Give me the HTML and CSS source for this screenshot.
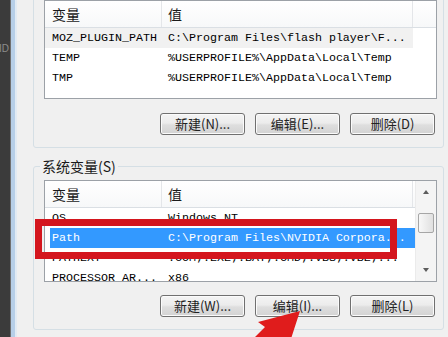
FILE: index.html
```html
<!DOCTYPE html>
<html lang="zh-CN">
<head>
<meta charset="utf-8">
<title>环境变量</title>
<link rel="stylesheet" href="styles.css">
</head>
<body>
<div class="page">
  <div class="frame"><span class="frame-text">ID</span></div>
  <div class="frame-edge"></div>
  <div class="dialog">
    <div class="group group-user">
      <div class="list list-user">
        <div class="lv-head">
          <div class="col c1">变量</div>
          <div class="col c2">值</div>
          <div class="col c3"></div>
        </div>
        <div class="lv-row hover"><div class="c1">MOZ_PLUGIN_PATH</div><div class="c2">C:\Program Files\flash player\F...</div></div>
        <div class="lv-row"><div class="c1">TEMP</div><div class="c2">%USERPROFILE%\AppData\Local\Temp</div></div>
        <div class="lv-row"><div class="c1">TMP</div><div class="c2">%USERPROFILE%\AppData\Local\Temp</div></div>
      </div>
      <div class="btns">
        <button class="btn">新建(N)...</button>
        <button class="btn">编辑(E)...</button>
        <button class="btn">删除(D)</button>
      </div>
    </div>
    <div class="group group-sys">
      <div class="legend">系统变量(S)</div>
      <div class="list list-sys">
        <div class="lv-main">
          <div class="lv-head">
            <div class="col c1">变量</div>
            <div class="col c2">值</div>
          </div>
          <div class="lv-row"><div class="c1">OS</div><div class="c2">Windows_NT</div></div>
          <div class="lv-row sel"><div class="c1">Path</div><div class="c2">C:\Program Files\NVIDIA Corpora...</div></div>
          <div class="lv-row"><div class="c1">PATHEXT</div><div class="c2">.COM;.EXE;.BAT;.CMD;.VBS;.VBE;...</div></div>
          <div class="lv-row"><div class="c1">PROCESSOR_AR...</div><div class="c2">x86</div></div>
        </div>
        <div class="sb">
          <div class="sb-btn"><span class="tri-up"></span></div>
          <div class="sb-thumb"></div>
          <div class="sb-track"></div>
          <div class="sb-btn"><span class="tri-down"></span></div>
        </div>
      </div>
      <div class="btns">
        <button class="btn">新建(W)...</button>
        <button class="btn">编辑(I)...</button>
        <button class="btn">删除(L)</button>
      </div>
    </div>
  </div>
  <div class="redbox"></div>
  <svg class="arrow" width="70" height="40" viewBox="240 305 70 40" aria-hidden="true">
    <polygon points="300,311 258,322 265,327 247,345 289,345" fill="#e01c1c"/>
  </svg>
</div>
</body>
</html>
```

FILE: styles.css
```css
body {
  margin: 0;
  background: #f0f0f0;
  font-family: "Noto Sans CJK SC", "Liberation Sans", sans-serif;
}

.page {
  position: relative;
  display: flex;
  width: 448px;
  height: 337px;
  overflow: hidden;
}

.frame {
  flex: none;
  width: 10px;
  background: #3b3b3b;
  overflow: hidden;
  padding-top: 43px;
  box-sizing: border-box;
}

.frame-text {
  display: block;
  font: 10px/12px "Liberation Sans", sans-serif;
  color: #8c8c8c;
  margin-left: -1px;
}

.frame-edge {
  flex: none;
  width: 7px;
  background: linear-gradient(to right, #707070 0 1px, #b7cfe8 1px 5px, #e2ebf4 5px 7px);
}

.dialog {
  flex: 1;
  display: flex;
  flex-direction: column;
  padding: 0 4px 0 16px;
}

.group {
  display: flex;
  flex-direction: column;
  border: 1px solid #d5dfe5;
  border-radius: 3px;
  padding: 18px 6px 12px 10px;
}

.group-user {
  margin-top: -19px;
}

.group-sys {
  margin-top: 18px;
  padding-top: 0;
}

.legend {
  align-self: flex-start;
  margin: -9px 0 0 -4px;
  padding: 0 2px;
  background: #f0f0f0;
  font-size: 14px;
  line-height: 16px;
  color: #1a1a1a;
}

.list {
  box-sizing: border-box;
  border: 1px solid #9ca1a7;
  background: #fff;
  overflow: hidden;
}

.list-user {
  height: 99px;
}

.list-sys {
  height: 102px;
  margin-top: 6px;
  display: flex;
}

.lv-main {
  flex: 1;
  overflow: hidden;
}

.lv-head {
  display: flex;
  height: 27px;
  box-sizing: border-box;
  border-bottom: 1px solid #dadfe4;
  background: linear-gradient(#ffffff, #f7f8f9);
}

.lv-head .col {
  font-size: 14px;
  line-height: 26px;
  color: #1a1a1a;
  border-right: 1px solid #e4e6e9;
}

.lv-head .c3 {
  flex: 1;
  border-right: none;
}

.c1 {
  flex: none;
  width: 117px;
  padding-left: 7px;
  box-sizing: border-box;
  overflow: hidden;
}

.c2 {
  flex: none;
  width: 251px;
  padding-left: 6px;
  box-sizing: border-box;
  overflow: hidden;
}

.lv-row {
  display: flex;
  width: 368px;
  height: 20px;
  font-family: "Liberation Mono", monospace;
  font-size: 11.67px;
  line-height: 20px;
  color: #000;
  white-space: nowrap;
  overflow: hidden;
}

.lv-row.hover {
  background: #f1f1f1;
}

.lv-row.sel {
  width: 365px;
  margin-left: 5px;
  background: #3399ff;
  color: #fff;
}

.lv-row.sel .c1 {
  width: 112px;
  padding-left: 2px;
}

.sb {
  flex: none;
  width: 21px;
  display: flex;
  flex-direction: column;
  background: #f4f4f4;
  border-left: 1px solid #ebebeb;
  box-sizing: border-box;
}

.sb-btn {
  flex: none;
  height: 22px;
  display: flex;
  align-items: center;
  justify-content: center;
}

.sb-thumb {
  flex: none;
  height: 18px;
  margin: 10px 2px 0;
  border: 1px solid #a6a6a6;
  border-radius: 2px;
  background: linear-gradient(to right, #f8f8f8, #e0e0e0);
}

.sb-track {
  flex: 1;
}

.tri-up {
  width: 0;
  height: 0;
  border-left: 3.5px solid transparent;
  border-right: 3.5px solid transparent;
  border-bottom: 4px solid #5c5c5c;
}

.tri-down {
  width: 0;
  height: 0;
  border-left: 3.5px solid transparent;
  border-right: 3.5px solid transparent;
  border-top: 4px solid #5c5c5c;
}

.btns {
  display: flex;
  justify-content: flex-end;
  gap: 10px;
  margin-top: 14px;
  padding-right: 2px;
}

.group-sys .btns {
  margin-top: 13px;
}

.btn {
  width: 85px;
  height: 22px;
  box-sizing: border-box;
  padding: 0;
  border: 1px solid #707070;
  border-radius: 3px;
  background: linear-gradient(#f4f4f4, #ececec 45%, #dedede 55%, #d3d3d3);
  box-shadow: inset 0 0 0 1px #fbfbfb;
  font-family: "Noto Sans CJK SC", sans-serif;
  font-size: 13px;
  line-height: 20px;
  color: #222;
  text-align: center;
}

.redbox {
  position: absolute;
  left: 35px;
  top: 219px;
  width: 362px;
  height: 40px;
  box-sizing: border-box;
  border: 7px solid #d4161e;
}

.arrow {
  position: absolute;
  left: 240px;
  top: 305px;
}
```
